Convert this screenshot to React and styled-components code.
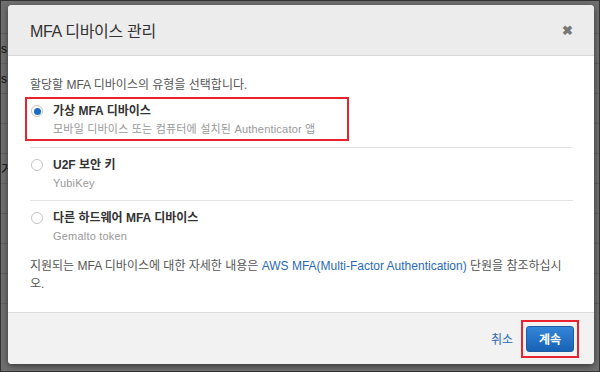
import styled, { createGlobalStyle } from 'styled-components'

const Global = createGlobalStyle`
    body {
        margin: 0;
        font-family: "Liberation Sans", "Noto Sans CJK KR", sans-serif;
    }
`

const Page = styled.div`
    position: relative;
    width: 600px;
    height: 372px;
    overflow: hidden;
    background: #f7f7f7;
    border: 1px solid #333;
    box-sizing: border-box;
`

const BgRow = styled.div`
    height: ${p => p.h}px;
    border-bottom: 1px solid #d6d6d6;
    box-sizing: border-box;
    display: flex;
    align-items: center;
    font-size: 12px;
    color: #222;
`

const Overlay = styled.div`
    position: absolute;
    inset: 0;
    background: rgba(0, 0, 0, 0.55);
    padding: 4px 5px 7px 7px;
    box-sizing: border-box;
    display: flex;
`

const Modal = styled.div`
    flex: 1;
    display: flex;
    flex-direction: column;
    background: #fff;
    border-radius: 4px;
    overflow: hidden;
    box-shadow: 0 2px 6px rgba(0, 0, 0, 0.5);
`

const Header = styled.div`
    height: 50px;
    flex: none;
    display: flex;
    align-items: center;
    justify-content: space-between;
    padding: 0 21px 0 22px;
    background: #ececec;
    border-bottom: 1px solid #d9d9d9;
`

const Title = styled.h2`
    margin: 0;
    font-size: 16px;
    font-weight: normal;
    color: #333;
    letter-spacing: -0.3px;
`

const Close = styled.span`
    font-size: 13px;
    font-weight: bold;
    color: #777;
    line-height: 1;
`

const Body = styled.div`
    flex: 1;
    padding: 20px 21px 0 22px;
    font-size: 12px;
    line-height: 18px;
    color: #555;
`

const Intro = styled.p`
    margin: 0 0 3px;
`

const Highlight = styled.div`
    width: 324px;
    margin-left: -5px;
    border: 2px solid #e8232e;
    padding: 3px 0 1px 4px;
    box-sizing: border-box;
`

const Option = styled.div`
    display: flex;
    gap: 10px;
    padding: ${p => p.pad || '0'};
    border-bottom: ${p => (p.last ? 'none' : '1px solid #e4e4e4')};
`

const Radio = styled.span`
    flex: none;
    width: 12px;
    height: 12px;
    margin-top: 3px;
    border: 1px solid #c4c4c4;
    border-radius: 50%;
    box-sizing: border-box;
    display: flex;
    align-items: center;
    justify-content: center;
    background: #fff;
    &::after {
        content: '';
        width: 7px;
        height: 7px;
        border-radius: 50%;
        background: ${p => (p.checked ? '#1a6cc4' : 'transparent')};
    }
`

const OptionText = styled.div`
    display: flex;
    flex-direction: column;
`

const Label = styled.span`
    font-weight: bold;
    color: #333;
`

const Sub = styled.span`
    font-size: 11px;
    letter-spacing: 0.2px;
    white-space: nowrap;
    color: #999;
`

const Note = styled.p`
    margin: 12px 0 0;
`

const Link = styled.a`
    color: #2a6ab8;
    text-decoration: none;
`

const Footer = styled.div`
    height: 51px;
    flex: none;
    display: flex;
    align-items: center;
    justify-content: flex-end;
    gap: 8px;
    padding-right: 15px;
    background: #f2f2f2;
    border-top: 1px solid #dcdcdc;
`

const Cancel = styled.a`
    font-size: 12px;
    color: #2a6ab8;
`

const Mark = styled.div`
    border: 2px solid #e8232e;
    padding: 4px 3px;
    display: flex;
`

const Button = styled.button`
    width: 48px;
    height: 26px;
    border: 1px solid #1b5ca3;
    border-radius: 3px;
    background: linear-gradient(#3486d8, #1862b5);
    color: #fff;
    font-family: inherit;
    font-size: 12px;
    font-weight: bold;
`

const Option1 = () => (
    <Highlight>
        <Option last>
            <Radio checked />
            <OptionText>
                <Label>가상 MFA 디바이스</Label>
                <Sub>모바일 디바이스 또는 컴퓨터에 설치된 Authenticator 앱</Sub>
            </OptionText>
        </Option>
    </Highlight>
)

const App = () => {
    return (
        <Page>
            <Global />
            <BgRow h={33}>&nbsp;</BgRow>
            <BgRow h={30}>s</BgRow>
            <BgRow h={30}>s</BgRow>
            <BgRow h={30}>&nbsp;</BgRow>
            <BgRow h={30}>&nbsp;</BgRow>
            <BgRow h={30}>거</BgRow>
            <BgRow h={30}>&nbsp;</BgRow>
            <BgRow h={30}>&nbsp;</BgRow>
            <BgRow h={30}>&nbsp;</BgRow>
            <BgRow h={30}>&nbsp;</BgRow>
            <Overlay>
                <Modal>
                    <Header>
                        <Title>MFA 디바이스 관리</Title>
                        <Close>✖</Close>
                    </Header>
                    <Body>
                        <Intro>할당할 MFA 디바이스의 유형을 선택합니다.</Intro>
                        <Option1 />
                        <Option pad="6px 0 0" />
                        <Option pad="8px 0 8px 1px">
                            <Radio />
                            <OptionText>
                                <Label>U2F 보안 키</Label>
                                <Sub>YubiKey</Sub>
                            </OptionText>
                        </Option>
                        <Option pad="8px 0 0 1px" last>
                            <Radio />
                            <OptionText>
                                <Label>다른 하드웨어 MFA 디바이스</Label>
                                <Sub>Gemalto token</Sub>
                            </OptionText>
                        </Option>
                        <Note>
                            지원되는 MFA 디바이스에 대한 자세한 내용은{' '}
                            <Link>AWS MFA(Multi-Factor Authentication)</Link> 단원을 참조하십시오.
                        </Note>
                    </Body>
                    <Footer>
                        <Cancel>취소</Cancel>
                        <Mark>
                            <Button>계속</Button>
                        </Mark>
                    </Footer>
                </Modal>
            </Overlay>
        </Page>
    )
}

export default App
